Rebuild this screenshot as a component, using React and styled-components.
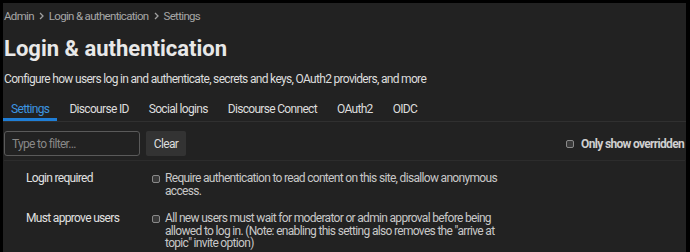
import React, { useState } from "react";
import styled, { createGlobalStyle, css } from "styled-components";

const GlobalStyle = createGlobalStyle`
  html, body {
    margin: 0;
    background: #000;
  }
  body {
    font-family: Roboto, "Liberation Sans", Arial, sans-serif;
  }
`;

// the small UI text is set tight, close to a narrow sans
const smallText = css`
  font-family: Roboto, "Liberation Sans", Arial, sans-serif;
  font-size: 12px;
  letter-spacing: -0.68px;
`;

const tabs = [
  "Settings",
  "Discourse ID",
  "Social logins",
  "Discourse Connect",
  "OAuth2",
  "OIDC",
];

const settings = [
  {
    name: "Login required",
    text: "Require authentication to read content on this site, disallow anonymous access.",
  },
  {
    name: "Must approve users",
    text: 'All new users must wait for moderator or admin approval before being allowed to log in. (Note: enabling this setting also removes the "arrive at topic" invite option)',
  },
];

const ChevronIcon = () => (
  <svg width="5" height="8" viewBox="0 0 5 8">
    <path d="M1 1l3 3-3 3" fill="none" stroke="#a0a0a0" strokeWidth="1.3" />
  </svg>
);

function App() {
  const [activeTab, setActiveTab] = useState("Settings");
  const [filter, setFilter] = useState("");

  return (
    <>
      <GlobalStyle />
      <Page>
        <Breadcrumbs>
          <span>Admin</span>
          <ChevronIcon />
          <span>Login &amp; authentication</span>
          <ChevronIcon />
          <span>Settings</span>
        </Breadcrumbs>
        <Title>Login &amp; authentication</Title>
        <Description>
          Configure how users log in and authenticate, secrets and keys, OAuth2
          providers, and more
        </Description>
        <TabBar>
          {tabs.map((tab) => (
            <Tab
              key={tab}
              $active={activeTab === tab}
              onClick={() => setActiveTab(tab)}
            >
              {tab}
            </Tab>
          ))}
        </TabBar>
        <FilterRow>
          <FilterInput
            placeholder="Type to filter…"
            value={filter}
            onChange={(e) => setFilter(e.target.value)}
          />
          <ClearButton onClick={() => setFilter("")}>Clear</ClearButton>
          <Overridden>
            <Box />
            Only show overridden
          </Overridden>
        </FilterRow>
        <SettingsList>
          {settings.map((s) => (
            <SettingRow key={s.name}>
              <SettingName>{s.name}</SettingName>
              <SettingValue>
                <Box $inline />
                <span>{s.text}</span>
              </SettingValue>
            </SettingRow>
          ))}
        </SettingsList>
      </Page>
    </>
  );
}

const Page = styled.div`
  margin: 3px 4px 0 3px;
  height: 249px;
  background: #222222;
  padding: 0 1px;
  overflow: hidden;
`;

const Breadcrumbs = styled.div`
  display: flex;
  align-items: center;
  gap: 5px;
  padding-top: 5px;
  height: 15px;
  ${smallText}
  font-size: 11.5px;
  color: #a6a6a6;
`;

const Title = styled.h1`
  margin: 13px 0 0;
  font-size: 22px;
  line-height: 26px;
  font-weight: 700;
  color: #e8e8e8;
`;

const Description = styled.p`
  margin: 10px 0 0;
  ${smallText}
  line-height: 15px;
  color: #dddddd;
`;

const TabBar = styled.div`
  display: flex;
  gap: 4px;
  margin: 10px -1px 0;
  border-bottom: 1px solid #303030;
`;

const Tab = styled.button`
  background: none;
  border: none;
  padding: 5px 8px 2px;
  ${smallText}
  line-height: 14px;
  cursor: pointer;
  color: ${(p) => (p.$active ? "#3d95e0" : "#dddddd")};
  border-bottom: 3px solid ${(p) => (p.$active ? "#1f7ed6" : "transparent")};
`;

const FilterRow = styled.div`
  display: flex;
  align-items: center;
  gap: 6px;
  padding: 9px 0 4px;
  border-bottom: 1px solid #2c2c2c;
`;

const FilterInput = styled.input`
  box-sizing: border-box;
  width: 136px;
  height: 25px;
  padding: 0 7px;
  background: #222222;
  border: 1px solid #5a5a5a;
  border-radius: 3px;
  color: #dddddd;
  ${smallText}

  &::placeholder {
    color: #888888;
  }
`;

const ClearButton = styled.button`
  height: 25px;
  width: 40px;
  padding: 0;
  background: #333333;
  border: none;
  border-radius: 2px;
  color: #dddddd;
  ${smallText}
`;

const Overridden = styled.label`
  margin-left: auto;
  display: flex;
  align-items: center;
  gap: 7px;
  padding-right: 1px;
  ${smallText}
  font-weight: 700;
  color: #cfcfcf;
`;

const Box = styled.span`
  display: inline-block;
  box-sizing: border-box;
  width: 8px;
  height: 8px;
  border: 1px solid #8a8a8a;
  border-radius: 2px;
  background: #3a3a3a;
  flex-shrink: 0;
  ${(p) => p.$inline && "margin-top: 3px;"}
`;

const SettingsList = styled.div`
  display: flex;
  flex-direction: column;
  gap: 15px;
  padding-top: 11px;
`;

const SettingRow = styled.div`
  display: grid;
  grid-template-columns: 148px 345px;
`;

const SettingName = styled.div`
  padding-left: 22px;
  ${smallText}
  line-height: 12.5px;
  color: #e0e0e0;
`;

const SettingValue = styled.div`
  display: flex;
  gap: 5px;
  ${smallText}
  line-height: 12.5px;
  color: #c8c8c8;
`;

export default App;
